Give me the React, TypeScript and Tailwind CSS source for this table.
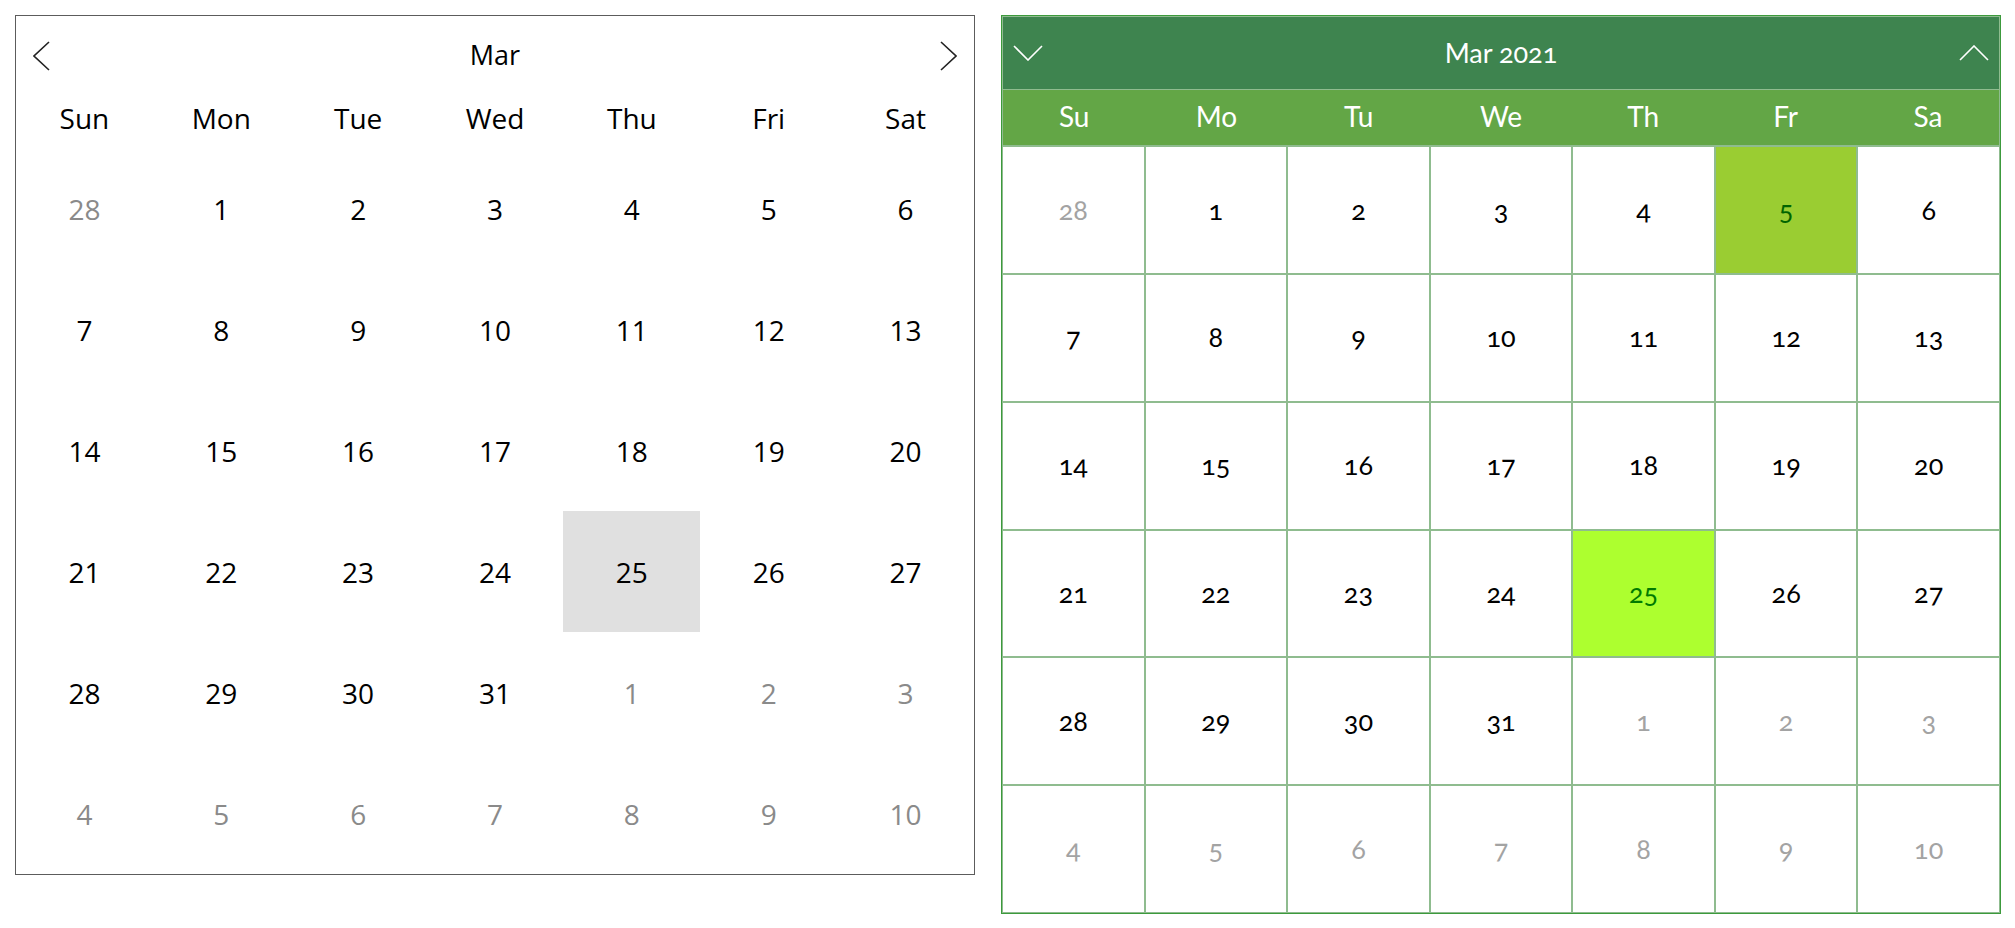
import { type ReactNode } from 'react';

// Two month views of March 2021: a plain one and a green themed one.

type Day = { n: number; muted: boolean };

const WEEKS: Day[][] = (() => {
  const days: Day[] = [{ n: 28, muted: true }];
  for (let i = 1; i <= 31; i++) days.push({ n: i, muted: false });
  for (let i = 1; i <= 10; i++) days.push({ n: i, muted: true });
  const rows: Day[][] = [];
  for (let r = 0; r < 6; r++) rows.push(days.slice(r * 7, r * 7 + 7));
  return rows;
})();

const LONG_NAMES = ['Sun', 'Mon', 'Tue', 'Wed', 'Thu', 'Fri', 'Sat'];
const SHORT_NAMES = ['Su', 'Mo', 'Tu', 'We', 'Th', 'Fr', 'Sa'];

function Chevron({ dir, className }: { dir: 'left' | 'right' | 'up' | 'down'; className?: string }) {
  const pts: Record<string, string> = {
    left: '16,1 1,15 16,29',
    right: '1,1 16,15 1,29',
    down: '1,1 15,15 29,1',
    up: '1,15 15,1 29,15',
  };
  const horiz = dir === 'left' || dir === 'right';
  return (
    <svg
      width={horiz ? 17 : 30}
      height={horiz ? 30 : 16}
      viewBox={horiz ? '0 0 17 30' : '0 0 30 16'}
      className={className}
      fill="none"
      stroke="currentColor"
      strokeWidth={1.6}
    >
      <polyline points={pts[dir]} />
    </svg>
  );
}

function PlainCalendar() {
  return (
    <div
      className="w-[960px] h-[860px] border border-[#5c5c5c] bg-white flex flex-col text-black"
      style={{ fontFamily: '"Open Sans", "Noto Sans", sans-serif' }}
    >
      <div className="h-[79px] flex items-center justify-between px-[17px]">
        <Chevron dir="left" className="text-[#222]" />
        <span className="text-[27px]">Mar</span>
        <Chevron dir="right" className="text-[#222]" />
      </div>
      <div className="h-[53px] grid grid-cols-7 items-center">
        {LONG_NAMES.map((d) => (
          <div key={d} className="text-center text-[28px] leading-none pb-[8px]">
            {d}
          </div>
        ))}
      </div>
      <div className="flex-1 grid grid-cols-7 grid-rows-6">
        {WEEKS.flat().map((d, i) => {
          const selected = !d.muted && d.n === 25;
          return (
            <div
              key={i}
              className={`flex items-center justify-center text-[28px] ${
                selected ? 'bg-[#e0e0e0]' : ''
              } ${d.muted ? 'text-[#8a8a8a]' : 'text-black'}`}
            >
              {d.n}
            </div>
          );
        })}
      </div>
    </div>
  );
}

function GreenCell({ d }: { d: Day }) {
  let cls = 'bg-white text-black';
  if (!d.muted && d.n === 5) cls = 'bg-[#9acd32] text-[#006400]';
  else if (!d.muted && d.n === 25) cls = 'bg-[#adff2f] text-[#007a00]';
  else if (d.muted) cls = 'bg-white text-[#a3a3a3]';
  return (
    <div className={`border border-[#8fbc8f] flex items-center justify-center text-[27px] oldstyle-nums ${cls}`}>
      {d.n}
    </div>
  );
}

function GreenCalendar() {
  const cells: ReactNode[] = WEEKS.flat().map((d, i) => <GreenCell key={i} d={d} />);
  return (
    <div
      className="w-[1000px] h-[899px] border border-[#3c9a3c] bg-white flex flex-col"
      style={{ fontFamily: 'Lato, "Noto Sans", sans-serif' }}
    >
      <div className="h-[73px] bg-[#3e844f] border border-[#8fbc8f] border-b-0 flex items-center justify-between px-[10px] text-white">
        <Chevron dir="down" />
        <span className="text-[27px] oldstyle-nums">Mar 2021</span>
        <Chevron dir="up" />
      </div>
      <div className="h-[57px] bg-[#63a646] border border-[#8fbc8f] grid grid-cols-7 items-center text-white">
        {SHORT_NAMES.map((d) => (
          <div key={d} className="text-center text-[28px] leading-none pb-[4px]">
            {d}
          </div>
        ))}
      </div>
      <div className="flex-1 grid grid-cols-7 grid-rows-6">{cells}</div>
    </div>
  );
}

export default function App() {
  return (
    <div className="min-h-screen bg-white flex items-start gap-[26px] pt-[15px] pl-[15px]">
      <PlainCalendar />
      <GreenCalendar />
    </div>
  );
}
